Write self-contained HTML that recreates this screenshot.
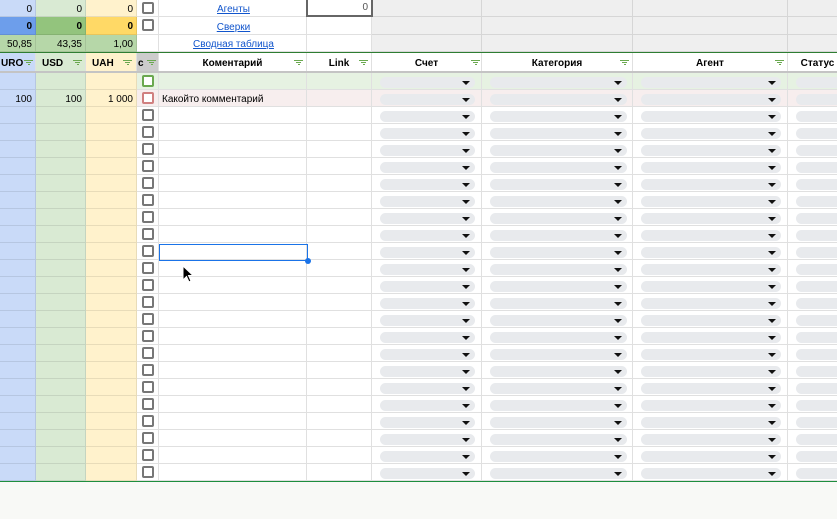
<!DOCTYPE html>
<html><head><meta charset="utf-8"><style>
*{box-sizing:border-box;margin:0;padding:0}
body{width:837px;height:519px;overflow:hidden;background:#f8f9f6;font-family:"Liberation Sans",Arial,sans-serif;font-size:10px;position:relative}
.c{position:absolute;border-right:1px solid #e0e0e0;border-bottom:1px solid #e0e0e0;overflow:hidden;white-space:nowrap;line-height:13px;padding-top:3px}
.k{border-color:rgba(0,0,0,0.09)}
.gr{border-color:#d6d6d6}
.n{text-align:right;padding-right:3px}
.cb{position:absolute;width:12px;height:12px;border:2px solid #777;border-radius:2px;background:#fff}
.dd{position:absolute;height:11px;background:#e8eaed;border-radius:6px}
.ar{position:absolute;width:0;height:0;border-left:4px solid transparent;border-right:4px solid transparent;border-top:4px solid #111}
.hd{position:absolute;font-weight:bold;font-size:10px;line-height:13px;padding-top:4px;text-align:center;border-right:1px solid #e0e0e0;overflow:hidden;white-space:nowrap}
.fl{position:absolute;width:9px;height:6px}
.fl i{display:block;height:1px;background:#6aa84f;margin:0 auto 1px}
a{color:#1155cc;text-decoration:underline}
</style></head><body>
<div id="g"></div>
<script>
var h='';
function cell(x,y,w,hh,bg,extra,txt){h+='<div class="c '+(extra||'')+'" style="left:'+x+'px;top:'+y+'px;width:'+w+'px;height:'+hh+'px;background:'+bg+'">'+(txt||'')+'</div>';}
var tops=[[0,17],[17,18],[35,17]];
var cols3=[[0,36],[36,50],[86,51]];
var bgs=[['#c9daf8','#d9ead3','#fff2cc'],['#6d9eeb','#93c47d','#ffd966'],['#b6d7a8','#b6d7a8','#b6d7a8']];
var vals=[['0','0','0'],['<b>0</b>','<b>0</b>','<b>0</b>'],['50,85','43,35','1,00']];
var RC=[[372,110],[482,151],[633,155],[788,60]];
for(var r=0;r<3;r++){for(var c=0;c<3;c++)cell(cols3[c][0],tops[r][0],cols3[c][1],tops[r][1],bgs[r][c],'n k',vals[r][c]);
 cell(137,tops[r][0],22,tops[r][1],'#fff');cell(159,tops[r][0],148,tops[r][1],'#fff');cell(307,tops[r][0],65,tops[r][1],'#fff');
 RC.forEach(function(a){cell(a[0],tops[r][0],a[1],tops[r][1],'#efefef','gr','')});}
h+='<div class="cb" style="left:142px;top:2px"></div><div class="cb" style="left:142px;top:19px"></div>';
h+='<div style="position:absolute;left:159px;top:4px;width:149px;text-align:center;font-size:10px"><a>Агенты</a></div>';
h+='<div style="position:absolute;left:159px;top:22px;width:149px;text-align:center;font-size:10px"><a>Сверки</a></div>';
h+='<div style="position:absolute;left:159px;top:39px;width:149px;text-align:center;font-size:10px"><a>Сводная таблица</a></div>';
h+='<div style="position:absolute;left:306px;top:0;width:67px;height:17px;border:2px solid #666;border-top:none;background:#fff;text-align:right;padding-right:3px;line-height:15px;color:#555">0</div>';
h+='<div style="position:absolute;left:0;top:52px;width:837px;height:1px;background:#2e7d32"></div>';
var hd=[[0,36,'#c9daf8','URO',24],[36,50,'#d9ead3','USD',37],[86,51,'#fff2cc','UAH',37],[137,22,'#ccc','c',10],[159,148,'#fff','Коментарий',135],[307,65,'#fff','Link',52],[372,110,'#fff','Счет',99],[482,151,'#fff','Категория',138],[633,155,'#fff','Агент',142],[788,60,'#fff','Статус',99]];
hd.forEach(function(a){var st='';
 if(a[0]==0)st='text-align:left;padding-left:1px';else if(a[0]<137)st='text-align:left;padding-left:6px';else if(a[0]==137)st='text-align:left;padding-left:1px';
 h+='<div class="hd" style="left:'+a[0]+'px;top:53px;width:'+a[1]+'px;height:18px;background:'+a[2]+';'+st+'">'+a[3]+'</div>';
 if(a[0]!=788)h+='<div class="fl" style="left:'+(a[0]+a[4])+'px;top:60px"><i style="width:9px"></i><i style="width:5px"></i><i style="width:2px"></i></div>';});
h+='<div style="position:absolute;left:0;top:71px;width:837px;height:3px;background:#c4c4c4"></div>';
for(var i=0;i<24;i++){var y=73+i*17;var rb=i==0?'#e6f2e2':i==1?'#f7eeee':'#fff';
 cell(0,y,36,17,'#c9daf8','n k',i==1?'100':'');cell(36,y,50,17,'#d9ead3','n k',i==1?'100':'');cell(86,y,51,17,'#fff2cc','n k',i==1?'1 000':'');
 cell(137,y,22,17,rb);cell(159,y,148,17,rb,'',i==1?'<span style="padding-left:3px">Какойто комментарий</span>':'');cell(307,y,65,17,rb);
 [[372,110,380,95],[482,151,490,137],[633,155,641,140],[788,60,796,50]].forEach(function(a){cell(a[0],y,a[1],17,rb);h+='<div class="dd" style="left:'+a[2]+'px;top:'+(y+4)+'px;width:'+a[3]+'px"></div>';if(a[0]!=788)h+='<div class="ar" style="left:'+(a[2]+a[3]-13)+'px;top:'+(y+8)+'px"></div>';});
 h+='<div class="cb" style="left:142px;top:'+(y+2)+'px;'+(i==0?'border-color:#6aa84f':i==1?'border-color:#d08080':'')+'"></div>';}
h+='<div style="position:absolute;left:0;top:481px;width:837px;height:1px;background:#1e8e3e"></div>';
h+='<div style="position:absolute;left:159px;top:244px;width:149px;height:17px;border:1px solid #1a73e8"></div>';
h+='<div style="position:absolute;left:305px;top:258px;width:6px;height:6px;border-radius:3px;background:#1a73e8"></div>';
h+='<svg style="position:absolute;left:182px;top:265px" width="12" height="18" viewBox="0 0 12 18"><path d="M1 1 L1 15 L4.5 11.5 L7 17 L9 16 L6.5 10.5 L11 10.5 Z" fill="#000" stroke="#fff" stroke-width="1"/></svg>';
document.getElementById('g').innerHTML=h;
</script>
</body></html>
